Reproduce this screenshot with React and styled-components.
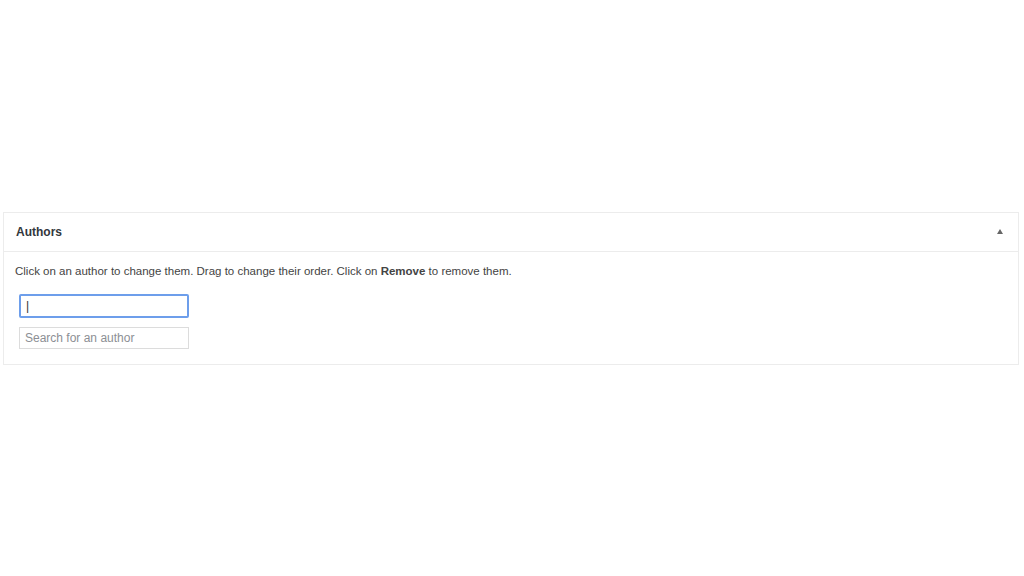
import React from 'react';
import styled, { createGlobalStyle } from 'styled-components';

const GlobalStyle = createGlobalStyle`
  body {
    margin: 0;
    background: #ffffff;
    font-family: "Liberation Sans", Arial, sans-serif;
  }
`;

// весь екран
const Page = styled.div`
  width: 1024px;
  height: 576px;
  padding: 212px 5px 0 3px;
  box-sizing: border-box;
`;

// панель "Authors"
const Panel = styled.div`
  border: 1px solid #ececec;
  background: #fff;
`;

const PanelHeader = styled.div`
  height: 38px;
  display: flex;
  align-items: center;
  justify-content: space-between;
  padding: 0 15px 0 12px;
  border-bottom: 1px solid #ececec;
`;

const Title = styled.h2`
  margin: 0;
  font-size: 12px;
  font-weight: bold;
  color: #32373c;
`;

const Toggle = styled.span`
  width: 0;
  height: 0;
  border-left: 3px solid transparent;
  border-right: 3px solid transparent;
  border-bottom: 5px solid #666;
  margin-top: -2px;
`;

const PanelBody = styled.div`
  padding: 13px 11px 15px;
`;

const Hint = styled.p`
  margin: 0 0 17px;
  font-size: 11.5px;
  color: #444;
`;

const Fields = styled.div`
  display: flex;
  flex-direction: column;
  gap: 9px;
  padding-left: 4px;
`;

const Field = styled.input`
  width: 170px;
  height: ${p => (p.$focused ? '24px' : '22px')};
  box-sizing: border-box;
  border: ${p => (p.$focused ? '2px solid #6d9eeb' : '1px solid #dcdcdc')};
  border-radius: ${p => (p.$focused ? '2px' : '0')};
  padding: 0 5px;
  font-family: inherit;
  font-size: 12px;
  color: #333;
  outline: none;
  &::placeholder {
    color: #8c8f94;
  }
`;

const App = () => {
  return (
    <>
      <GlobalStyle />
      <Page>
        <Panel>
          <PanelHeader>
            <Title>Authors</Title>
            <Toggle />
          </PanelHeader>
          <PanelBody>
            <Hint>
              Click on an author to change them. Drag to change their order. Click on <b>Remove</b> to remove them.
            </Hint>
            <Fields>
              <Field $focused defaultValue="|" />
              <Field placeholder="Search for an author" />
            </Fields>
          </PanelBody>
        </Panel>
      </Page>
    </>
  );
};

export default App;
